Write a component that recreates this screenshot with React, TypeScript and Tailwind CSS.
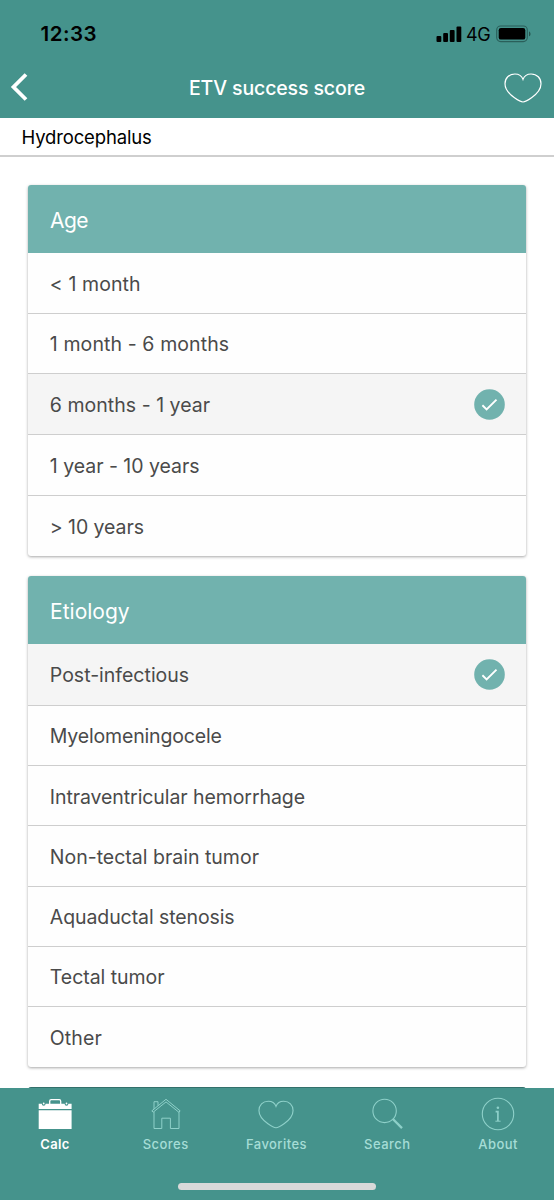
import { useState } from "react";
import clsx from "clsx";

interface Option {
    label: string;
    className: string;
}

interface Question {
    title: string;
    titleClass: string;
    options: Option[];
}

const questions: Question[] = [
    {
        title: "Age",
        titleClass: "tracking-[-0.5px]",
        options: [
            { label: "< 1 month", className: "tracking-[0.1px]" },
            { label: "1 month - 6 months", className: "tracking-[0.1px]" },
            { label: "6 months - 1 year", className: "tracking-[0.03px]" },
            { label: "1 year - 10 years", className: "tracking-[-0.03px]" },
            { label: "> 10 years", className: "tracking-[-0.06px]" },
        ],
    },
    {
        title: "Etiology",
        titleClass: "tracking-[0.02px]",
        options: [
            { label: "Post-infectious", className: "tracking-[0px]" },
            { label: "Myelomeningocele", className: "tracking-[-0.16px]" },
            { label: "Intraventricular hemorrhage", className: "tracking-[-0.08px]" },
            { label: "Non-tectal brain tumor", className: "tracking-[0px]" },
            { label: "Aquaductal stenosis", className: "tracking-[-0.09px]" },
            { label: "Tectal tumor", className: "tracking-[-0.04px]" },
            { label: "Other", className: "tracking-[0.1px]" },
        ],
    },
];

function HeartIcon({ className }: { className?: string }) {
    return (
        <svg viewBox="0 0 38 30" fill="none" stroke="currentColor" strokeWidth="1.2" className={className}>
            <path d="M19 6.400C17.700 2.800 15 1 10.900 1 5 1 1 5 1 10.800 1 16.800 5.400 21.200 10.500 24.800 13.500 26.900 16.800 29 19 29 21.200 29 24.500 26.900 27.500 24.800 32.600 21.200 37 16.800 37 10.800 37 5 33 1 27.100 1 23 1 20.300 2.800 19 6.400Z" />
        </svg>
    );
}

function CaseIcon() {
    return (
        <svg width="36" height="34" viewBox="0 0 36 34" fill="currentColor">
            <path d="M12.700 8V4.200a1.500 1.500 0 0 1 1.500-1.500h8a1.500 1.500 0 0 1 1.500 1.500V8" fill="none" stroke="currentColor" strokeWidth="1.300" />
            <path d="M1.700 6.800H4.800a1.900 1.900 0 0 0 3.800 0H27.600a1.900 1.900 0 0 0 3.800 0H34.600V12H1.700ZM1.700 13.200H34.600V32H1.700Z" />
            <circle cx="6.700" cy="6.500" r="0.900" />
            <circle cx="29.500" cy="6.500" r="0.900" />
        </svg>
    );
}

function HouseIcon() {
    return (
        <svg width="36" height="34" viewBox="0 0 36 34" fill="none" stroke="currentColor">
            <path d="M3.800 13.900 18 2.300l14.200 11.600M5.200 15.200 18 4.900l12.800 10.300M3.800 13.900l1.400 1.300M32.200 13.900l-1.400 1.300" />
            <path d="M6 12V4.700h4v4M6 14.700v16.800h7.800V21.200h8.600v10.300H31V14.700" />
        </svg>
    );
}

function SearchIcon() {
    return (
        <svg width="36" height="34" viewBox="0 0 36 34" fill="none" stroke="currentColor">
            <circle cx="15.600" cy="13.900" r="11.700" strokeWidth="1.100" />
            <path d="m24.100 22.300 8.900 8.800" strokeWidth="2.300" />
        </svg>
    );
}

function InfoIcon() {
    return (
        <svg width="36" height="34" viewBox="0 0 36 34" fill="none" stroke="currentColor">
            <circle cx="18" cy="17" r="15.700" strokeWidth="1.100" />
            <circle cx="17.900" cy="10.800" r="1.300" fill="currentColor" stroke="none" />
            <path d="M15.600 14.700h2.300v9.400" strokeWidth="1.700" />
            <path d="M15.400 24.200h5.200" strokeWidth="1" />
        </svg>
    );
}

const tabs = [
    { label: "Calc", icon: <CaseIcon /> },
    { label: "Scores", icon: <HouseIcon /> },
    { label: "Favorites", icon: <HeartIcon className="h-[29px] w-[36px]" /> },
    { label: "Search", icon: <SearchIcon /> },
    { label: "About", icon: <InfoIcon /> },
];

function StatusBar() {
    return (
        <div className="flex h-[58px] items-start justify-between pl-[40.500px] pr-[22px] pt-[23px] text-black">
            <span className="text-[20.500px] font-semibold leading-[22px] tracking-[0.500px]">12:33</span>
            <div className="flex h-[22px] items-center">
                <svg width="26" height="16" viewBox="0 0 26 16" fill="currentColor">
                    <rect x="0.500" y="10" width="4.800" height="6" rx="1" />
                    <rect x="7.200" y="7" width="4.800" height="9" rx="1" />
                    <rect x="13.800" y="4" width="4.800" height="12" rx="1" />
                    <rect x="20.500" y="0.500" width="4.800" height="15.500" rx="1" />
                </svg>
                <span className="ml-[4px] pt-px text-[18px] leading-[22px] tracking-[-0.300px]">4G</span>
                <svg width="36" height="18" viewBox="0 0 36 18" className="ml-[5.500px]">
                    <rect x="0.700" y="1" width="30.600" height="15.600" rx="4" fill="none" stroke="#2a5f5a" strokeWidth="1.100" />
                    <rect x="2.700" y="3" width="26.600" height="11.600" rx="2.200" fill="black" />
                    <path d="M33 6.400c2 .6 2 4.300 0 4.900Z" fill="#275650" />
                </svg>
            </div>
        </div>
    );
}

export default function App() {
    const [selected, setSelected] = useState<Record<string, string>>({
        Age: "6 months - 1 year",
        Etiology: "Post-infectious",
    });
    const [activeTab, setActiveTab] = useState("Calc");

    return (
        <div className="flex h-[1200px] w-full flex-col overflow-hidden bg-white font-['Inter',sans-serif]">
            <header className="h-[118px] shrink-0 bg-[#45938c]">
                <StatusBar />
                <div className="grid h-[60px] grid-cols-[60px_1fr_60px] items-center text-white">
                    <button className="pl-[10px]" aria-label="Back">
                        <svg width="20" height="30" viewBox="0 0 20 30" fill="none" stroke="currentColor" strokeWidth="3.800">
                            <path d="M16 1.500 3.500 14 16 26.500" />
                        </svg>
                    </button>
                    <h1 className="text-center text-[19.500px] font-medium leading-[24px] tracking-[-0.120px]">ETV success score</h1>
                    <button className="flex justify-end pr-[12px]" aria-label="Add to favorites">
                        <HeartIcon className="h-[30px] w-[38px]" />
                    </button>
                </div>
            </header>

            <div className="flex h-[39px] shrink-0 items-center border-b-2 border-[#cfcfcf] pl-[21.500px] pt-[2px] text-[18.500px] text-black">
                <span className="tracking-[-0.150px]">Hydrocephalus</span>
            </div>

            <main className="flex min-h-0 flex-1 flex-col gap-[20px] overflow-hidden px-[28px] pt-[28px]">
                {questions.map((q) => (
                    <section key={q.title} className="shrink-0 overflow-hidden rounded-[3px] bg-[#fefefe] shadow-[0_1px_3px_rgba(0,0,0,0.350)]">
                        <h2 className="flex h-[68.400px] items-center bg-[#71b2ae] px-[22px] pt-[4px] text-[21px] text-white">
                            <span className={q.titleClass}>{q.title}</span>
                        </h2>
                        {q.options.map((opt) => {
                            const checked = selected[q.title] === opt.label;
                            return (
                                <button
                                    key={opt.label}
                                    onClick={() => setSelected({ ...selected, [q.title]: opt.label })}
                                    className={clsx(
                                        "flex w-full items-center justify-between border-b border-[#cecece] pl-[21.800px] pr-[21.500px] text-left text-[19.500px] text-[#4a4a4a] last:border-b-0",
                                        checked ? "h-[61.500px] bg-[#f5f5f5]" : "h-[60.250px]"
                                    )}
                                >
                                    <span className={clsx("pt-[3px]", opt.className)}>{opt.label}</span>
                                    {checked && (
                                        <svg width="31" height="31" viewBox="0 0 31 31" fill="none">
                                            <circle cx="15.500" cy="15.500" r="15.300" fill="#71b2ae" />
                                            <path d="m8.400 16.300 4.200 4.100L22.500 10.600" stroke="white" strokeWidth="1.900" />
                                        </svg>
                                    )}
                                </button>
                            );
                        })}
                    </section>
                ))}
                <section className="h-[68px] shrink-0 rounded-t-[3px] bg-[#33706b]" />
            </main>

            <nav className="flex h-[112px] shrink-0 flex-col items-center bg-[#45938c]">
                <div className="grid h-[94.500px] w-full grid-cols-5 pt-[9px]">
                    {tabs.map((tab) => (
                        <button
                            key={tab.label}
                            onClick={() => setActiveTab(tab.label)}
                            className={clsx("-ml-px flex flex-col items-center", activeTab === tab.label ? "text-white" : "text-[#8ed0c9]")}
                        >
                            <span className="flex h-[34px] items-center">{tab.icon}</span>
                            <span
                                className={clsx(
                                    "mt-[5px] text-[13px] leading-[16px]",
                                    activeTab === tab.label ? "font-semibold tracking-[0.300px]" : "font-medium tracking-[0.450px] text-[#a5ddd6]"
                                )}
                            >
                                {tab.label}
                            </span>
                        </button>
                    ))}
                </div>
                <div className="h-[7px] w-[198px] rounded-full bg-[#d9d9d9]" />
            </nav>
        </div>
    );
}
